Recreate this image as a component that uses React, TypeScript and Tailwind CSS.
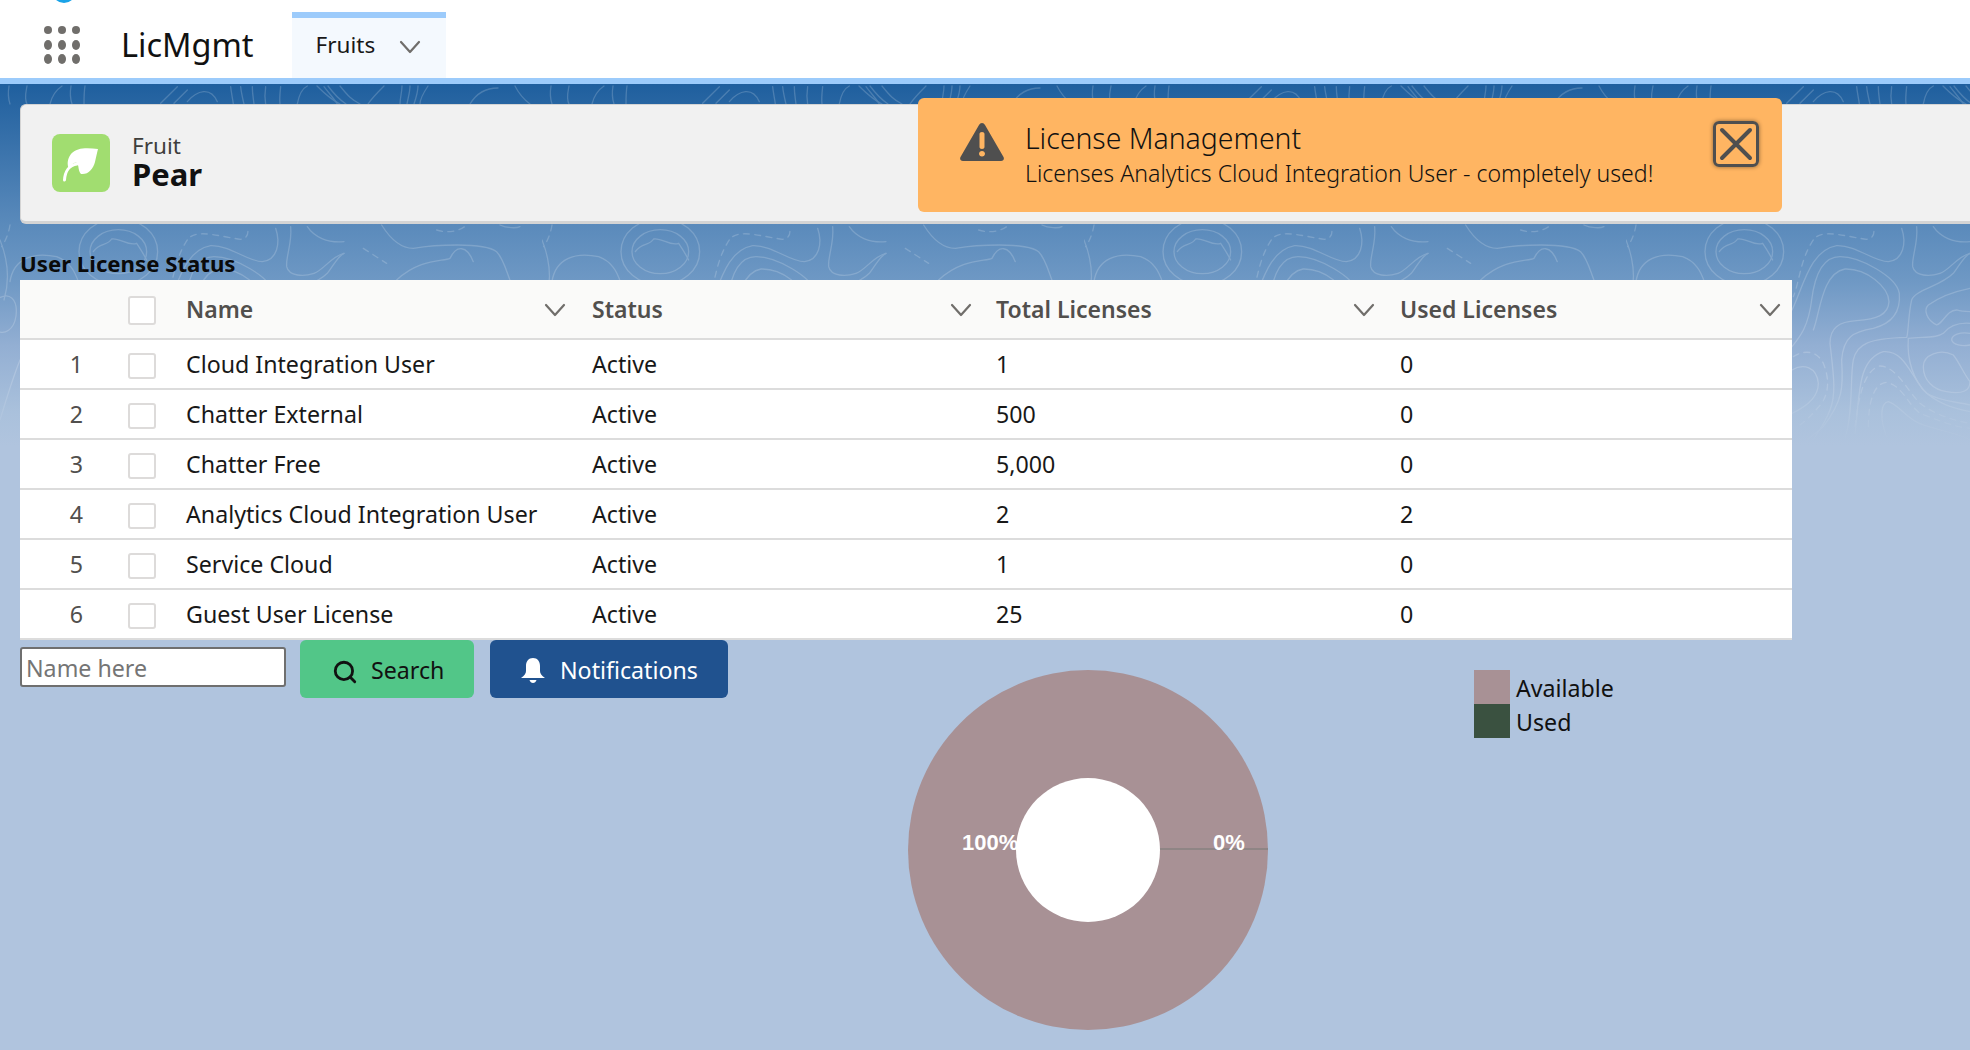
import React from "react";
import { Search } from "lucide-react";

const ROWS = [
  { name: "Cloud Integration User", total: "1", used: "0" },
  { name: "Chatter External", total: "500", used: "0" },
  { name: "Chatter Free", total: "5,000", used: "0" },
  { name: "Analytics Cloud Integration User", total: "2", used: "2" },
  { name: "Service Cloud", total: "1", used: "0" },
  { name: "Guest User License", total: "25", used: "0" },
];

const Chevron = ({ className = "" }: { className?: string }) => (
  <svg viewBox="0 0 22 14" className={`h-[14px] w-[22px] ${className}`} fill="none" stroke="#706e6b" strokeWidth="2.2" strokeLinecap="round" strokeLinejoin="round">
    <path d="M2 2l9 10 9-10" />
  </svg>
);

// contour lines behind the page header, one tile repeated across the width
const TopoTile = () => (
  <g fill="none" stroke="#fff" strokeLinecap="round">
    <g transform="translate(154 80) scale(0.3333)" strokeWidth="4">
      <path d="M36 690C70 620 90 510 170 497C230 495 280 545 325 545C370 540 380 490 365 445" />
      <path d="M36 800C60 770 85 740 95 660C105 580 130 530 180 530C240 530 350 590 358 640C362 690 340 730 280 745C220 755 190 770 185 840C190 920 190 960 130 1040C110 1060 90 1070 75 1085" />
      <path d="M100 750C120 700 125 580 195 567C260 565 325 620 327 665C325 705 290 718 230 722C175 725 150 745 150 790C160 880 170 940 150 990C130 1040 110 1060 100 1080" />
      <path d="M195 1075C220 1000 210 890 220 840C230 790 270 775 380 772C385 765 385 700 395 660C405 630 480 620 520 580C540 555 550 530 570 520" />
      <path d="M225 1060C240 950 230 840 310 815C370 810 390 880 430 930C470 970 520 985 570 995" />
      <path d="M410 440C415 490 395 530 398 560C405 590 450 590 480 580C510 570 530 530 570 520" />
      <path d="M460 440C480 470 520 490 570 485" />
      <path d="M570 625C520 635 480 650 445 675C430 690 440 720 470 735C490 730 500 690 530 690C545 695 560 695 570 695" />
      <path d="M570 730C540 728 510 735 490 760C470 775 430 770 385 775C380 840 400 900 440 940C480 965 530 965 570 975" />
      <path d="M430 860C430 825 480 805 520 825C540 850 550 880 570 905C570 930 550 945 500 935C460 930 430 900 430 860Z" />
      <path d="M570 760C540 755 515 765 515 780C520 795 545 800 570 795" />
      <path d="M36 870C70 850 110 860 115 910C115 950 80 980 36 1000" />
      <path d="M320 1070C300 1020 300 970 325 965C360 975 380 1020 430 1035C470 1050 540 1060 570 1080" />
      <path strokeDasharray="18 16" d="M40 830C70 810 110 810 130 850C150 900 145 940 125 970C100 1000 80 1020 60 1035" />
      <path strokeDasharray="18 16" d="M225 1040C235 960 250 870 300 858C350 860 380 930 420 970C460 1000 510 1020 570 1030" />
      <path strokeDasharray="18 16" d="M265 1040C265 970 280 910 320 907C370 920 380 970 420 1000C470 1020 520 1040 570 1045" />
      <path strokeDasharray="18 16" d="M100 480C60 540 60 600 40 650" />
      <path strokeDasharray="18 16" d="M110 470C140 450 200 470 260 478C280 475 285 460 280 445" />
      <path d="M20 70L70 20M60 70L100 30M100 65C130 30 170 20 190 65M230 20C232 40 236 55 238 72M260 20C262 40 266 55 270 72M295 20C295 40 298 55 300 72M335 20C332 40 332 55 335 72M380 20C378 40 376 55 378 72M430 72C436 40 445 25 460 18M510 20C525 40 540 55 550 72" />
    </g>
    <g transform="translate(0 215) scale(0.3333)" strokeWidth="4">
      <ellipse cx="355" cy="110" rx="118" ry="100" />
      <ellipse cx="355" cy="110" rx="85" ry="66" />
      <path d="M280 110C300 80 320 95 335 72C360 68 385 95 410 85C420 100 430 115 440 135" />
      <path d="M30 200C40 130 100 110 170 125C210 140 225 170 235 200" />
      <path d="M1145 30C1170 70 1200 100 1240 100C1300 90 1450 80 1490 110C1510 130 1520 170 1530 195" />
      <path d="M1190 195C1260 130 1330 140 1350 130C1370 90 1400 90 1420 140" />
      <path d="M1500 30C1520 40 1550 40 1560 35" />
      <path strokeDasharray="18 16" d="M1310 45C1340 55 1380 50 1400 30" />
      <path strokeDasharray="18 16" d="M1090 100L1160 145" />
      <path strokeDasharray="18 16" d="M30 30C25 60 15 80 5 95" />
    </g>
    <path strokeWidth="1.3" d="M9 86C8 92 8 98 10 104M27 86C26 92 24 98 27 104M50 104C52 96 56 90 62 86M71 86C70 92 70 98 72 104M85 86C84 92 84 98 84 104M317 86C325 94 332 100 340 104M328 86C334 94 340 100 346 104M340 86C348 96 352 100 360 104M384 86C376 94 372 98 368 104M402 86C402 92 400 98 400 104M410 86C410 92 408 98 407 104M418 86C418 92 416 98 414 104M428 86C424 92 420 98 420 104M470 104C476 94 486 88 498 88M515 86C518 92 522 98 530 104" />
    <path strokeWidth="1.3" d="M-4 300C10 290 18 300 16 316C14 330 4 336 -4 330M0 240C8 260 10 280 4 300M0 420C6 400 12 380 20 360" />
  </g>
);

export default function App() {
  return (
    <div className="relative h-[1050px] w-[1970px] overflow-hidden bg-[#b0c4de] bg-[linear-gradient(180deg,#1f5f9e_84px,#5a8abb_224px,#6e98c4_280px,#93afd3_346px,#aac1dc_413px,#b0c4de_446px)] font-['Noto_Sans',sans-serif] text-[23.2px] text-[#181818]">
      <svg className="absolute inset-0 h-full w-full" aria-hidden="true">
        <defs>
          <pattern id="topo" patternUnits="userSpaceOnUse" width="542" height="1050">
            <TopoTile />
          </pattern>
          <linearGradient id="fade" x1="0" y1="0" x2="0" y2="1050" gradientUnits="userSpaceOnUse">
            <stop offset="0.36" stopColor="#fff" stopOpacity="0.18" />
            <stop offset="0.425" stopColor="#fff" stopOpacity="0" />
          </linearGradient>
          <mask id="fadeMask">
            <rect width="1970" height="1050" fill="url(#fade)" />
          </mask>
        </defs>
        <rect width="1970" height="1050" fill="url(#topo)" mask="url(#fadeMask)" />
      </svg>

      <header className="relative flex h-[84px] items-start border-b-[6px] border-[#9ccbfb] bg-white">
        <div className="absolute left-[52px] top-[-21px] h-6 w-6 rounded-full bg-[#1aa3e8]" />
        <svg viewBox="0 0 36 38" className="ml-[44px] mt-[26px] h-[38px] w-[36px]" fill="#706e6b">
          {[4, 18, 32].map((x) =>
            [4, 19, 33].map((y) => <ellipse key={`${x}-${y}`} cx={x} cy={y} rx="4" ry={y === 4 ? 4 : 5} />)
          )}
        </svg>
        <div className="ml-[41px] mt-[23px] text-[32.5px] leading-[44px] text-[#111]">LicMgmt</div>
        <div className="ml-[38px] mt-[12px] flex h-[66px] w-[154px] items-center border-t-[6px] border-[#9ccbfb] bg-[#f4f9fe] pb-[6px] pl-[24px] text-[22.5px]">
          <span>Fruits</span>
          <Chevron className="ml-[24px] mt-[4px]" />
        </div>
      </header>

      <div className="relative">
        <div className="ml-5 mt-5 flex h-[120px] items-center rounded-l-md border border-r-0 border-b-[3px] border-[#d4d4d4] bg-[#f1f1f1] pl-[31px]">
          <div className="flex h-[58px] w-[58px] items-center justify-center rounded-lg bg-[#a1dd70]">
            <svg viewBox="0 0 58 58" className="h-[58px] w-[58px]">
              <path fill="#fff" d="M46 15C36 14 25 13 19 20C15 25 15 31 17 35C19 31 22 28 25 29C27 31 26 37 29 40C36 41 41 35 43 28C44 23 45 19 46 15Z" />
              <path fill="none" stroke="#fff" strokeWidth="3" strokeLinecap="round" d="M12.5 46C13 38 17 31 25 30" />
            </svg>
          </div>
          <div className="mb-[6px] ml-[22px]">
            <div className="text-[22.5px] leading-[28px] text-[#3e3e3c]">Fruit</div>
            <div className="text-[31px] font-bold leading-[29px] text-[#111]">Pear</div>
          </div>
        </div>

        <div className="ml-5 flex h-[56px] items-end pb-[1px] text-[22.2px] font-bold leading-[30px] text-[#0a0a0a]">User License Status</div>

        <div className="ml-5 w-[1772px] bg-white">
          <div className="flex h-[60px] items-center border-b-2 border-[#dcdcdc] bg-[#fafaf9] pt-[1px] text-[23px] font-semibold text-[#514f4d]">
            <div className="w-[108px]" />
            <div className="w-[58px]">
              <div className="mt-[2px] h-[29px] w-[28px] rounded-[3px] border-2 border-[#dddbda] bg-white" />
            </div>
            <div className="flex w-[406px] items-center justify-between pr-[26px]">
              <span>Name</span>
              <Chevron />
            </div>
            <div className="flex w-[404px] items-center justify-between pr-[24px]">
              <span>Status</span>
              <Chevron />
            </div>
            <div className="flex w-[404px] items-center justify-between pr-[25px]">
              <span>Total Licenses</span>
              <Chevron />
            </div>
            <div className="flex w-[392px] items-center justify-between pr-[11px]">
              <span>Used Licenses</span>
              <Chevron />
            </div>
          </div>
          {ROWS.map((row, i) => (
            <div key={row.name} className="flex h-[50px] items-center border-b-2 border-[#dcdcdc]">
              <div className="w-[108px] pl-[5px] text-center text-[#514f4d]">{i + 1}</div>
              <div className="w-[58px]">
                <div className="mt-[3px] h-[26px] w-[28px] rounded-[3px] border-2 border-[#dddbda] bg-white" />
              </div>
              <div className="w-[406px]">{row.name}</div>
              <div className="w-[404px]">Active</div>
              <div className="w-[404px]">{row.total}</div>
              <div className="w-[392px]">{row.used}</div>
            </div>
          ))}
        </div>

        <div className="flex items-start pl-5">
          <div className="flex w-[888px] items-start">
            <input
              placeholder="Name here"
              className="mt-[7px] h-[40px] w-[266px] rounded-[3px] border-2 border-[#6f6f6f] bg-white px-[4px] pt-[2px] text-[23.2px] outline-none placeholder:text-[#757575]"
            />
            <button className="ml-[14px] flex h-[58px] w-[174px] items-center rounded-md bg-[#52c688] pl-[32px] text-[#111]">
              <Search size={26} strokeWidth={2.6} className="mt-[5px]" />
              <span className="ml-[13px] mt-[2px]">Search</span>
            </button>
            <button className="ml-[16px] flex h-[58px] w-[238px] items-center rounded-md bg-[#20528f] pl-[31px] text-white">
              <svg viewBox="0 0 24 25" className="mt-[3px] h-[25px] w-[24px]" fill="#fff">
                <path d="M12 0C7.5 0 5 3.5 5 8v5c0 2.5-1.5 4.5-5 7h24c-3.500-2.500-5-4.500-5-7V8c0-4.500-2.500-8-7-8z" />
                <path d="M8.500 22h7c-.5 2-2 3-3.500 3s-3-1-3.500-3z" />
              </svg>
              <span className="ml-[15px] mt-[2px]">Notifications</span>
            </button>
          </div>
          <svg viewBox="0 0 360 360" className="mt-[30px] h-[360px] w-[360px] shrink-0">
            <circle cx="180" cy="180" r="180" fill="#a89195" />
            <path d="M252 179H360" stroke="#8f8585" strokeWidth="2" />
            <text x="54" y="180" fill="#fff" fontFamily="'Liberation Sans',sans-serif" fontWeight="700" fontSize="22">100%</text>
            <text x="305" y="180" fill="#fff" fontFamily="'Liberation Sans',sans-serif" fontWeight="700" fontSize="22">0%</text>
            <circle cx="180" cy="180" r="72" fill="#fff" />
          </svg>
          <div className="ml-[206px] mt-[30px]">
            <div className="flex h-[34px] items-center">
              <div className="h-[34px] w-[36px] bg-[#a89195]" />
              <span className="ml-[6px] mt-[2px] text-[#111]">Available</span>
            </div>
            <div className="flex h-[34px] items-center">
              <div className="h-[34px] w-[36px] bg-[#3a5140]" />
              <span className="ml-[6px] mt-[2px] text-[#111]">Used</span>
            </div>
          </div>
        </div>
      </div>

      <div className="absolute left-[918px] top-[98px] flex h-[114px] w-[864px] items-start rounded-md bg-[#ffb562] text-[#111]">
        <svg viewBox="0 0 44 38" className="ml-[42px] mt-[25px] h-[38px] w-[44px]" fill="#4f4f4f">
          <path fillRule="evenodd" d="M22 0c1.300 0 2.300.7 3 2l18.500 32c1 2 0 4-2.500 4H3c-2.500 0-3.500-2-2.500-4L19 2c.7-1.300 1.700-2 3-2zM19.500 11v13c0 1.200 1 2 2.500 2s2.500-.8 2.500-2V11c0-1.200-1-2-2.500-2s-2.500.8-2.500 2zM22 28c-1.700 0-3 1.200-3 2.700s1.300 2.800 3 2.800 3-1.300 3-2.800-1.300-2.700-3-2.700z" />
        </svg>
        <div className="ml-[21px] mt-[21px]">
          <div className="text-[28.4px] font-light leading-[38px]">License Management</div>
          <div className="text-[23.1px] font-light leading-[32px]">Licenses Analytics Cloud Integration User - completely used!</div>
        </div>
        <button className="absolute left-[795px] top-[23px] flex h-[46px] w-[46px] items-center justify-center rounded-md border-[3px] border-[#4f4f4f] shadow-[0_0_4px_rgba(0,0,0,0.45)]">
          <svg viewBox="0 0 34 34" className="h-[34px] w-[34px]" fill="none" stroke="#4f4f4f" strokeWidth="4" strokeLinecap="round">
            <path d="M3 3l28 28M31 3L3 31" />
          </svg>
        </button>
      </div>
    </div>
  );
}
